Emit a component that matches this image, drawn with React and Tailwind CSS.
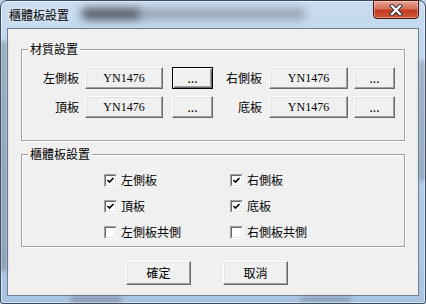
import React from "react";

const CJK = { fontFamily: '"Noto Sans CJK TC", "Noto Sans CJK SC", sans-serif' };
const SERIF = { fontFamily: '"Liberation Serif", "Noto Sans CJK TC", serif' };

function Btn({ children, w, h = 22, def = false, serif = false }) {
  const cls = def
    ? "border border-black shadow-[inset_1px_1px_0_#ffffff,inset_-1px_-1px_0_#696969,inset_-2px_-2px_0_#a0a0a0]"
    : "border border-t-white border-l-white border-r-[#696969] border-b-[#696969] shadow-[inset_-1px_-1px_0_#a0a0a0,inset_1px_1px_0_#e3e3e3]";
  return (
    <div
      className={`${cls} bg-[#f0f0f0] flex items-center justify-center text-[12px] text-black shrink-0`}
      style={{ width: w, height: h, ...(serif ? SERIF : CJK) }}
    >
      {children}
    </div>
  );
}

function Check({ checked, label, w }) {
  return (
    <div className="flex items-center shrink-0" style={{ width: w }}>
      <div className="w-[13px] h-[13px] border border-t-[#a0a0a0] border-l-[#a0a0a0] border-r-white border-b-white shrink-0">
        <div className="w-[11px] h-[11px] border border-t-[#696969] border-l-[#696969] border-r-[#e3e3e3] border-b-[#e3e3e3] bg-white">
          {checked && (
            <svg width="9" height="9" viewBox="0 0 9 9" className="block">
              <path d="M1.5 4 L3.5 6 L7.5 2" stroke="#000" strokeWidth="1.6" fill="none" />
            </svg>
          )}
        </div>
      </div>
      <span className="ml-[4px] text-[12px] leading-[14px] text-black" style={CJK}>
        {label}
      </span>
    </div>
  );
}

function GroupLabel({ children }) {
  return (
    <div
      className="-mt-[8px] ml-[6px] w-fit px-[2px] bg-[#f0f0f0] text-[12px] leading-[14px] h-[14px] text-black"
      style={CJK}
    >
      {children}
    </div>
  );
}

function MatRow({ l1, l2, first }) {
  return (
    <div className={`flex items-center h-[22px] ${first ? "mt-[11px]" : "mt-[7px]"}`}>
      <div className="w-[57px] text-right text-[12px] text-black shrink-0" style={CJK}>
        {l1}
      </div>
      <div className="ml-[6px]">
        <Btn w={78} serif>YN1476</Btn>
      </div>
      <div className="ml-[9px]">
        <Btn w={41} def={first}>...</Btn>
      </div>
      <div className="w-[49px] text-right text-[12px] text-black shrink-0" style={CJK}>
        {l2}
      </div>
      <div className="ml-[7px]">
        <Btn w={79} serif>YN1476</Btn>
      </div>
      <div className="ml-[6px]">
        <Btn w={41}>...</Btn>
      </div>
    </div>
  );
}

export default function App() {
  return (
    <div className="w-[426px] h-[304px] overflow-hidden bg-[#bcd3ea]">
      <div className="relative w-[426px] h-[304px] rounded-t-[7px] rounded-b-[3px] border border-[#3a4c60] bg-[linear-gradient(180deg,#c9dcf0_0%,#b7cfe8_40%,#a9c4e2_100%)] shadow-[inset_0_0_0_1px_rgba(255,255,255,0.55)] flex flex-col">
        {/* blurred desktop reflections */}
        <div className="absolute left-[80px] top-[7px] w-[60px] h-[12px] bg-[#3b3f46] blur-[4px] opacity-80 rounded-full" />
        <div className="absolute left-[135px] top-[8px] w-[170px] h-[10px] bg-[#6d7682] blur-[5px] opacity-60 rounded-full" />
        <div className="absolute left-[0px] top-[40px] w-[5px] h-[230px] bg-[#5b6573] blur-[2px] opacity-50" />
        <div className="absolute right-[1px] top-[60px] w-[4px] h-[120px] bg-[#5b6573] blur-[2px] opacity-50" />
        <div className="absolute left-[70px] bottom-[1px] w-[50px] h-[5px] bg-[#5b6573] blur-[2px] opacity-50" />
        <div className="absolute left-[300px] bottom-[1px] w-[50px] h-[5px] bg-[#5b6573] blur-[2px] opacity-40" />

        {/* title bar */}
        <div className="relative h-[27px] shrink-0 flex items-start">
          <div
            className="ml-[8px] mt-[7px] text-[12px] leading-[14px] text-black [text-shadow:0_0_6px_rgba(255,255,255,0.9)]"
            style={CJK}
          >
            櫃體板設置
          </div>
          {/* close button */}
          <div className="absolute right-[6px] -top-[1px] w-[46px] h-[19px] rounded-b-[4px] border border-[#4a1610] bg-[linear-gradient(180deg,#e8a593_0%,#d47158_45%,#c23a1c_55%,#cf5a38_100%)] shadow-[inset_0_0_0_1px_rgba(255,255,255,0.35)] flex items-center justify-center">
            <svg width="16" height="12" viewBox="0 0 16 12">
              <path d="M4 2 L12 10 M12 2 L4 10" stroke="#2e3440" strokeWidth="4.2" strokeLinecap="square" />
              <path d="M4 2 L12 10 M12 2 L4 10" stroke="#ffffff" strokeWidth="2.2" strokeLinecap="square" />
            </svg>
          </div>
        </div>

        {/* client area */}
        <div className="ml-[6px] w-[412px] h-[268px] border border-[#6f7f92] bg-[#f0f0f0] flex flex-col">
          {/* group 1 */}
          <div className="mt-[20px] ml-[13px] w-[384px] h-[92px] border border-[#a0a0a0] shadow-[1px_1px_0_#fff,inset_1px_1px_0_#fff] shrink-0">
            <GroupLabel>材質設置</GroupLabel>
            <MatRow l1="左側板" l2="右側板" first />
            <MatRow l1="頂板" l2="底板" />
          </div>

          {/* group 2 */}
          <div className="mt-[13px] ml-[13px] w-[384px] h-[93px] border border-[#a0a0a0] shadow-[1px_1px_0_#fff,inset_1px_1px_0_#fff] shrink-0">
            <GroupLabel>櫃體板設置</GroupLabel>
            <div className="mt-[6px] flex flex-col pl-[82px]">
              <div className="flex items-center h-[26px]">
                <Check checked label="左側板" w={126} />
                <Check checked label="右側板" />
              </div>
              <div className="flex items-center h-[26px]">
                <Check checked label="頂板" w={126} />
                <Check checked label="底板" />
              </div>
              <div className="flex items-center h-[26px]">
                <Check label="左側板共側" w={126} />
                <Check label="右側板共側" />
              </div>
            </div>
          </div>

          {/* buttons */}
          <div className="mt-[14px] ml-[118px] flex gap-[32px]">
            <Btn w={65} h={24}>確定</Btn>
            <Btn w={65} h={24}>取消</Btn>
          </div>
        </div>
      </div>
    </div>
  );
}
